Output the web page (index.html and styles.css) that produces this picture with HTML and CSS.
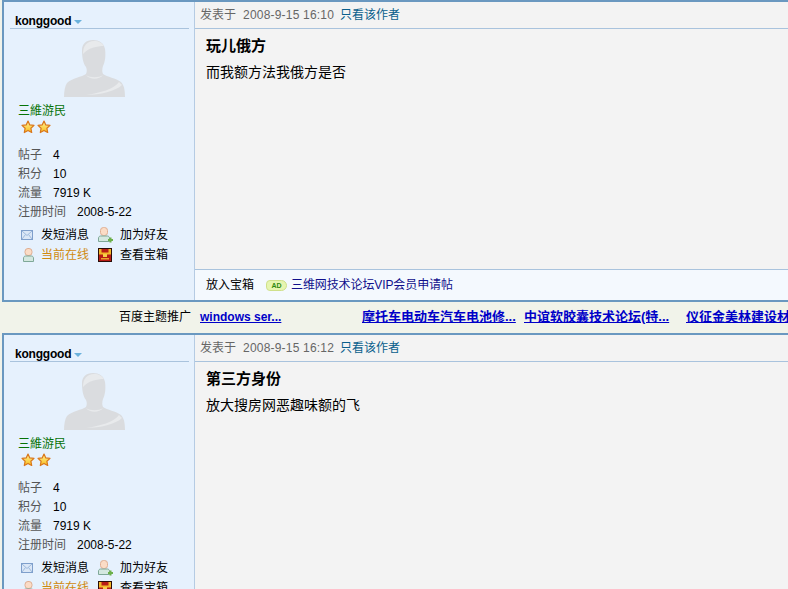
FILE: index.html
```html
<!DOCTYPE html>
<html lang="zh">
<head>
<meta charset="utf-8">
<title>三维网技术论坛</title>
<link rel="stylesheet" href="styles.css">
</head>
<body>
<svg class="defs" width="0" height="0" aria-hidden="true">
  <defs>
    <linearGradient id="star" x1="0" y1="0" x2="0" y2="1"><stop offset="0" stop-color="#fff59a"/><stop offset="1" stop-color="#f9bd1c"/></linearGradient>
    <symbol id="avatar" viewBox="0 0 61 58">
      <path d="M29 1C22 1 18 5 18 11C18 18 19 24 22 28C23 30 23 33 22 35C18 38 8 39 3 44C1 47 0 52 0 58H61C61 51 60 46 57 43C52 39 43 38 39 35C38 33 38 30 39 27C41 23 42 17 41 10C40 4 35 1 29 1Z" fill="#dadcdf"/>
      <path d="M19 15C19 7 23 2 30 2C35 2 38 4 40 7C33 7 24 9 19 15ZM22 36C26 39 35 39 39 36C35 41 26 41 22 36ZM58 46C52 52 36 56 22 56C36 54 50 50 55 43Z" fill="#e8eaec"/>
    </symbol>
    <symbol id="star-i" viewBox="0 0 14 14">
      <path d="M7 1l1.800 3.900 4.200.5-3.100 2.900.8 4.200L7 10.400l-3.700 2.100.8-4.200L1 5.400l4.200-.5z" fill="url(#star)" stroke="#d9761a" stroke-width="1.200" stroke-linejoin="round"/>
    </symbol>
    <symbol id="mail" viewBox="0 0 12 10">
      <rect x=".5" y=".5" width="11" height="9" fill="#dbe7f6" stroke="#7f9fcb"/>
      <path d="M1 1l5 4.500L11 1M1 9l3.500-4.500M11 9L7.500 4.500" fill="none" stroke="#9dbadd"/>
    </symbol>
    <symbol id="user-add" viewBox="0 0 15 16">
      <rect x="2.500" y=".5" width="7" height="8" rx="3" fill="#fbdcc6" stroke="#dfae92"/>
      <path d="M.5 14.500V11c0-1 1-2 2-2h7c1 0 2 1 2 2v3.500z" fill="#d4e8e0" stroke="#7fa898"/>
      <path d="M10 13h5M12.500 10.500v5" stroke="#6cb04a" stroke-width="2"/>
    </symbol>
    <symbol id="user" viewBox="0 0 11 14">
      <rect x="2" y=".5" width="7" height="7" rx="3" fill="#fbdcc6" stroke="#dfae92"/>
      <path d="M.5 13.500V10c0-1 1-2 2-2h6c1 0 2 1 2 2v3.500z" fill="#d4e8e0" stroke="#7fa898"/>
    </symbol>
    <symbol id="chest" viewBox="0 0 14 14">
      <rect width="14" height="14" fill="#2a0d08"/>
      <rect x="1" y="1" width="12" height="12" fill="#b81c16"/>
      <path d="M1 1h2.500v3.500h7V1H13v5.500H1z" fill="#f2b92a"/>
      <rect x="5" y="6" width="4" height="3" fill="#f7d04a"/>
      <path d="M3 10h8v1.500H3z" fill="#e9a52a"/>
    </symbol>
  </defs>
</svg>

<section class="post">
  <aside class="side">
    <div class="user"><b class="name">konggood</b><i class="caret"></i></div>
    <svg class="avatar"><use href="#avatar"/></svg>
    <div class="rank">三維游民</div>
    <div class="stars"><svg class="star"><use href="#star-i"/></svg><svg class="star"><use href="#star-i"/></svg></div>
    <dl class="stats">
      <div class="stat"><dt>帖子</dt><dd>4</dd></div>
      <div class="stat"><dt>积分</dt><dd>10</dd></div>
      <div class="stat"><dt>流量</dt><dd>7919 K</dd></div>
      <div class="stat"><dt>注册时间</dt><dd>2008-5-22</dd></div>
    </dl>
    <ul class="acts">
      <li><svg class="ic ic-mail"><use href="#mail"/></svg>发短消息</li>
      <li><svg class="ic ic-add"><use href="#user-add"/></svg>加为好友</li>
      <li class="online"><svg class="ic ic-user"><use href="#user"/></svg>当前在线</li>
      <li><svg class="ic ic-chest"><use href="#chest"/></svg>查看宝箱</li>
    </ul>
  </aside>
  <div class="main">
    <header class="meta"><span class="lbl">发表于</span><span class="time">2008-9-15 16:10</span><a class="only">只看该作者</a></header>
    <article class="body">
      <h2 class="title">玩儿俄方</h2>
      <p class="text">而我额方法我俄方是否</p>
    </article>
    <footer class="foot"><span class="box">放入宝箱</span><span class="ad">AD</span><a class="adlink">三维网技术论坛VIP会员申请帖</a></footer>
  </div>
</section>

<nav class="promo">
  <span class="promo-l">百度主题推广</span>
  <a class="link">windows ser...</a>
  <a class="link cjk">摩托车电动车汽车电池修...</a>
  <a class="link cjk">中谊软胶囊技术论坛(特...</a>
  <a class="link cjk">仪征金美林建设材料有限公司</a>
</nav>

<section class="post">
  <aside class="side">
    <div class="user"><b class="name">konggood</b><i class="caret"></i></div>
    <svg class="avatar"><use href="#avatar"/></svg>
    <div class="rank">三維游民</div>
    <div class="stars"><svg class="star"><use href="#star-i"/></svg><svg class="star"><use href="#star-i"/></svg></div>
    <dl class="stats">
      <div class="stat"><dt>帖子</dt><dd>4</dd></div>
      <div class="stat"><dt>积分</dt><dd>10</dd></div>
      <div class="stat"><dt>流量</dt><dd>7919 K</dd></div>
      <div class="stat"><dt>注册时间</dt><dd>2008-5-22</dd></div>
    </dl>
    <ul class="acts">
      <li><svg class="ic ic-mail"><use href="#mail"/></svg>发短消息</li>
      <li><svg class="ic ic-add"><use href="#user-add"/></svg>加为好友</li>
      <li class="online"><svg class="ic ic-user"><use href="#user"/></svg>当前在线</li>
      <li><svg class="ic ic-chest"><use href="#chest"/></svg>查看宝箱</li>
    </ul>
  </aside>
  <div class="main">
    <header class="meta"><span class="lbl">发表于</span><span class="time">2008-9-15 16:12</span><a class="only">只看该作者</a></header>
    <article class="body">
      <h2 class="title">第三方身份</h2>
      <p class="text">放大搜房网恶趣味额的飞</p>
    </article>
  </div>
</section>
</body>
</html>
```

FILE: styles.css
```css
html, body { margin: 0; padding: 0; height: 589px; overflow: hidden; }
body {
  width: 788px;
  background: #f1f3ea;
  font: 12px/16px "Liberation Sans", "Noto Sans CJK SC", sans-serif;
  color: #000;
}
.defs { position: absolute; }
.post {
  display: grid;
  grid-template-columns: 191px 1fr;
  height: 298px;
  margin-left: 2px;
  border-top: 2px solid #6a98c0;
  border-left: 2px solid #6a98c0;
  border-bottom: 2px solid #6a98c0;
}
.post:last-child { height: 254px; border-bottom: 0; }
.side {
  background: #e6f1fd;
  border-right: 1px solid #b5cbe3;
  padding: 9px 0 0 6px;
  box-sizing: border-box;
}
.user {
  display: flex;
  align-items: flex-end;
  width: 179px;
  height: 18px;
  padding-left: 5px;
  box-sizing: border-box;
  border-bottom: 1px solid #a9c3dd;
}
.name { font: bold 12px/13px "Liberation Sans", sans-serif; letter-spacing: -.2px; }
.caret {
  width: 0; height: 0; margin: 0 0 4px 3px;
  border: 4px solid transparent;
  border-top: 4px solid #6bb2dc;
  border-bottom: 0;
}
.avatar { display: block; width: 61px; height: 58px; margin: 10px 0 0 54px; }
.rank { margin: 6px 0 0 8px; color: #067306; }
.stars { display: flex; gap: 2px; margin: 1px 0 0 11px; height: 14px; }
.star { width: 14px; height: 14px; }
.stats { margin: 11px 0 0 8px; }
.stat { display: flex; height: 19px; align-items: center; }
.stat dt { color: #555; margin-right: 11px; }
.stat dd { margin: 1px 0 0; }
.acts {
  list-style: none;
  display: grid;
  grid-template-columns: 80px 80px;
  row-gap: 3px;
  margin: 5px 0 0 8px;
  padding: 0;
}
.acts li { display: flex; align-items: center; height: 17px; }
.ic { flex: none; }
.ic-mail { width: 12px; height: 10px; margin: 0 8px 0 3px; }
.ic-add { width: 15px; height: 16px; margin-right: 7px; }
.ic-user { width: 11px; height: 14px; margin: 0 7px 0 5px; }
.ic-chest { width: 14px; height: 14px; margin-right: 8px; }
.online { color: #d08a10; }
.main { display: flex; flex-direction: column; min-width: 0; background: #f3f3f3; }
.meta {
  height: 27px;
  box-sizing: border-box;
  flex: none;
  display: flex;
  align-items: center;
  padding: 0 0 0 5px;
  border-bottom: 1px solid #a9c3dd;
  color: #666;
  white-space: nowrap;
}
.lbl { margin-right: 7px; }
.time { letter-spacing: .2px; margin-right: 6px; }
.only { color: #0a5f8c; }
.body { flex: 1; padding: 6px 0 0 11px; }
.title { margin: 0; font: bold 15px/20px "Noto Sans CJK SC", sans-serif; }
.text { margin: 7px 0 0; font-size: 14px; line-height: 20px; }
.foot {
  height: 31px;
  flex: none;
  display: flex;
  align-items: center;
  padding-left: 11px;
  background: #f4f9fe;
  border-top: 1px solid #a9c3dd;
  box-sizing: border-box;
  white-space: nowrap;
}
.box { margin-right: 12px; }
.ad {
  width: 21px; height: 11px;
  box-sizing: border-box;
  margin-right: 4px;
  background: #e6f5b0;
  border: 1px solid #cfe08a;
  border-radius: 5px 7px 7px 5px;
  color: #2f8a10;
  font: bold 7px/9px "Liberation Sans", sans-serif;
  text-align: center;
}
.adlink { color: #10108c; letter-spacing: -.1px; }
.promo {
  display: grid;
  grid-template-columns: 200px 162px 162px 162px 102px;
  height: 31px;
  padding-top: 7px;
  box-sizing: border-box;
  white-space: nowrap;
  overflow: hidden;
}
.promo-l { text-align: right; padding-right: 9px; }
.link { color: #0000c8; font-weight: bold; text-decoration: underline; overflow: visible; }
.cjk { font-size: 13px; }
```
